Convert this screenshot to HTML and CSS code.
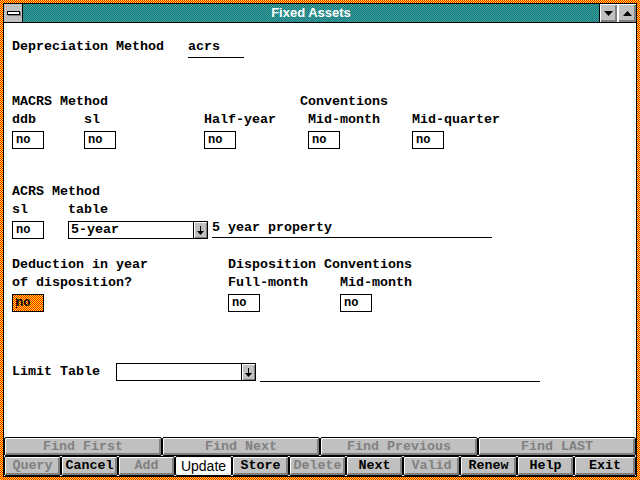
FILE: index.html
```html
<!DOCTYPE html>
<html>
<head>
<meta charset="utf-8">
<link rel="stylesheet" href="styles.css">
</head>
<body>
<div class="window dither">
  <div class="inner">
    <div class="titlebar">
      <div class="sysmenu"><span class="sysbar"></span></div>
      <div class="title">Fixed Assets</div>
      <div class="tbtn"><svg width="9" height="5" viewBox="0 0 9 5"><path d="M0 0H9L4.5 5Z" fill="#000"/></svg></div>
      <div class="tbtn"><svg width="9" height="5" viewBox="0 0 9 5"><path d="M0 5H9L4.5 0Z" fill="#000"/></svg></div>
    </div>
    <div class="content">
      <div class="row-dep">
        <span class="lbl-dep">Depreciation Method</span>
        <span class="uline short">acrs</span>
      </div>

      <div class="hdr-macrs">
        <span class="w288">MACRS Method</span><span>Conventions</span>
      </div>
      <div class="grid-macrs">
        <span>ddb</span><span>sl</span><span>Half-year</span><span>Mid-month</span><span>Mid-quarter</span>
        <span class="box">no</span><span class="box">no</span><span class="box">no</span><span class="box">no</span><span class="box">no</span>
      </div>

      <div class="hdr-acrs">ACRS Method</div>
      <div class="grid-acrs">
        <span>sl</span><span>table</span><span></span>
        <span class="box">no</span>
        <span class="combo"><span class="combo-val">5-year</span><span class="combo-btn"><svg width="7" height="9" viewBox="0 0 7 9"><path d="M3 0H4V5H3Z M0 5H7L3.5 9Z" fill="#000"/></svg></span></span>
        <span class="uline long">5 year property</span>
      </div>

      <div class="grid-disp">
        <span>Deduction in year</span><span class="span2">Disposition Conventions</span>
        <span>of disposition?</span><span>Full-month</span><span>Mid-month</span>
        <span class="box focus dither"><span class="caret"></span>no</span><span class="box">no</span><span class="box">no</span>
      </div>

      <div class="row-limit">
        <span class="lbl-limit">Limit Table</span>
        <span class="combo"><span class="combo-val"></span><span class="combo-btn"><svg width="7" height="9" viewBox="0 0 7 9"><path d="M3 0H4V5H3Z M0 5H7L3.5 9Z" fill="#000"/></svg></span></span>
        <span class="uline long"></span>
      </div>

      <div class="buttons">
        <div class="brow1">
          <span class="btn dis">Find First</span>
          <span class="btn dis">Find Next</span>
          <span class="btn dis">Find Previous</span>
          <span class="btn dis">Find LAST</span>
        </div>
        <div class="brow2">
          <span class="btn dis">Query</span>
          <span class="btn">Cancel</span>
          <span class="btn dis">Add</span>
          <span class="btn def">Update</span>
          <span class="btn">Store</span>
          <span class="btn dis">Delete</span>
          <span class="btn">Next</span>
          <span class="btn dis">Valid</span>
          <span class="btn">Renew</span>
          <span class="btn">Help</span>
          <span class="btn">Exit</span>
        </div>
      </div>
    </div>
  </div>
</div>
</body>
</html>
```
FILE: styles.css
```css
html, body { margin: 0; padding: 0; background: #fff; }
body { font-family: "Liberation Mono", "DejaVu Sans Mono", monospace; font-weight: bold; font-size: 13.33px; color: #000; }

/* 1px red/yellow checker (vector pattern tile) */
.dither {
  background-color: #ff8000;
  background-image: url("data:image/svg+xml,%3Csvg xmlns='http://www.w3.org/2000/svg' width='2' height='2' shape-rendering='crispEdges'%3E%3Crect width='2' height='2' fill='%23ffff00'/%3E%3Crect width='1' height='1' fill='%23ff0000'/%3E%3Crect x='1' y='1' width='1' height='1' fill='%23ff0000'/%3E%3C/svg%3E");
  background-size: 2px 2px;
}

.window {
  width: 640px; height: 480px; box-sizing: border-box; padding: 3px;
  display: flex; flex-direction: column;
}
.inner { flex: 1; border: 1px solid #000; background: #fff; display: flex; flex-direction: column; min-height: 0; }

.titlebar { height: 18px; display: flex; border-bottom: 1px solid #000; flex: none; }
.sysmenu { width: 18px; background: #c0c0c0; border-right: 1px solid #000; display: flex; align-items: center; justify-content: center; }
.sysbar { width: 11px; height: 2px; background: #fff; border: 1px solid #000; box-shadow: 1px 1px 0 #808080; margin-top: -1px; }
.title {
  flex: 1; color: #fff; text-align: center; line-height: 18px;
  font-family: "Liberation Sans", Arial, sans-serif; font-size: 13px; font-weight: bold;
  background-color: #2a8a8a;
  background-image: url("data:image/svg+xml,%3Csvg xmlns='http://www.w3.org/2000/svg' width='2' height='2' shape-rendering='crispEdges'%3E%3Crect width='2' height='2' fill='%23008080'/%3E%3Crect width='1' height='1' fill='%23509898'/%3E%3Crect x='1' y='1' width='1' height='1' fill='%23509898'/%3E%3C/svg%3E");
  background-size: 2px 2px;
  border-right: 1px solid #000;
}
.tbtn {
  width: 18px; height: 18px; box-sizing: border-box; background: #c0c0c0;
  box-shadow: inset 1px 1px 0 #fff, inset -1px -1px 0 #808080, inset -2px -2px 0 #808080;
  display: flex; align-items: center; justify-content: center; border-right: 1px solid #fff;
}
.tbtn:last-child { border-right: 0; }

.content { flex: 1; display: flex; flex-direction: column; padding-left: 8px; }
.content > * { line-height: 18px; }

.row-dep { margin-top: 15px; display: flex; height: 20px; }
.lbl-dep { width: 176px; }
.uline { border-bottom: 1px solid #000; box-sizing: border-box; display: inline-block; }
.uline.short { width: 56px; height: 20px; }

.hdr-macrs { margin-top: 35px; display: flex; }
.w288 { width: 288px; }
.grid-macrs { display: grid; grid-template-columns: 72px 120px 104px 104px auto; grid-template-rows: 18px 18px; row-gap: 2px; }

.box {
  display: inline-flex; align-items: center; box-sizing: border-box;
  width: 32px; height: 18px; border: 1px solid #000; padding-left: 3px; font-size: 12px;
  line-height: 14px; background-color: #fff;
}
.box.focus { position: relative; }
.caret { position: absolute; left: 3px; top: 3px; width: 1px; height: 10px; border-left: 1px dotted #000; }

.hdr-acrs { margin-top: 34px; }
.grid-acrs { display: grid; grid-template-columns: 56px 144px 280px; grid-template-rows: 18px 18px; row-gap: 2px; justify-content: start; }

.combo {
  display: flex; width: 140px; height: 18px; box-sizing: border-box; border: 1px solid #000; background: #fff;
}
.combo-val { flex: 1; padding-left: 2px; line-height: 16px; }
.combo-btn {
  width: 13px; background: #c0c0c0; border-left: 1px solid #000; display: flex; align-items: center; justify-content: center;
  box-shadow: inset 1px 1px 0 #fff, inset -1px -1px 0 #808080;
}
.uline.long { width: 280px; height: 17px; line-height: 14px; }

.grid-disp { margin-top: 17px; display: grid; grid-template-columns: 216px 112px auto; grid-template-rows: 18px 18px 18px; row-gap: 0; }
.grid-disp .box { margin-top: 2px; }
.span2 { grid-column: 2 / 4; }

.row-limit { margin-top: 53px; display: flex; align-items: flex-start; gap: 4px; }
.lbl-limit { width: 100px; line-height: 18px; }
.row-limit .uline.long { height: 19px; }

.buttons { margin-top: auto; margin-left: -8px; display: flex; flex-direction: column; }
.brow1 { display: grid; grid-template-columns: repeat(4, 1fr); height: 19px; }
.brow2 { display: grid; grid-template-columns: repeat(10, 57px) 1fr; height: 20px; }
.btn {
  box-sizing: border-box; border: 1px solid #000; border-radius: 2px; background: #c0c0c0;
  box-shadow: inset 1px 1px 0 #fff, inset -1px -1px 0 #808080, inset -2px -2px 0 #808080;
  display: flex; align-items: center; justify-content: center; line-height: 1; font-size: 13.33px;
}
.btn.dis { color: #808080; }
.btn.def { background: #fff; box-shadow: none; font-family: "Liberation Sans", Arial, sans-serif; font-size: 14px; font-weight: normal; }
```
